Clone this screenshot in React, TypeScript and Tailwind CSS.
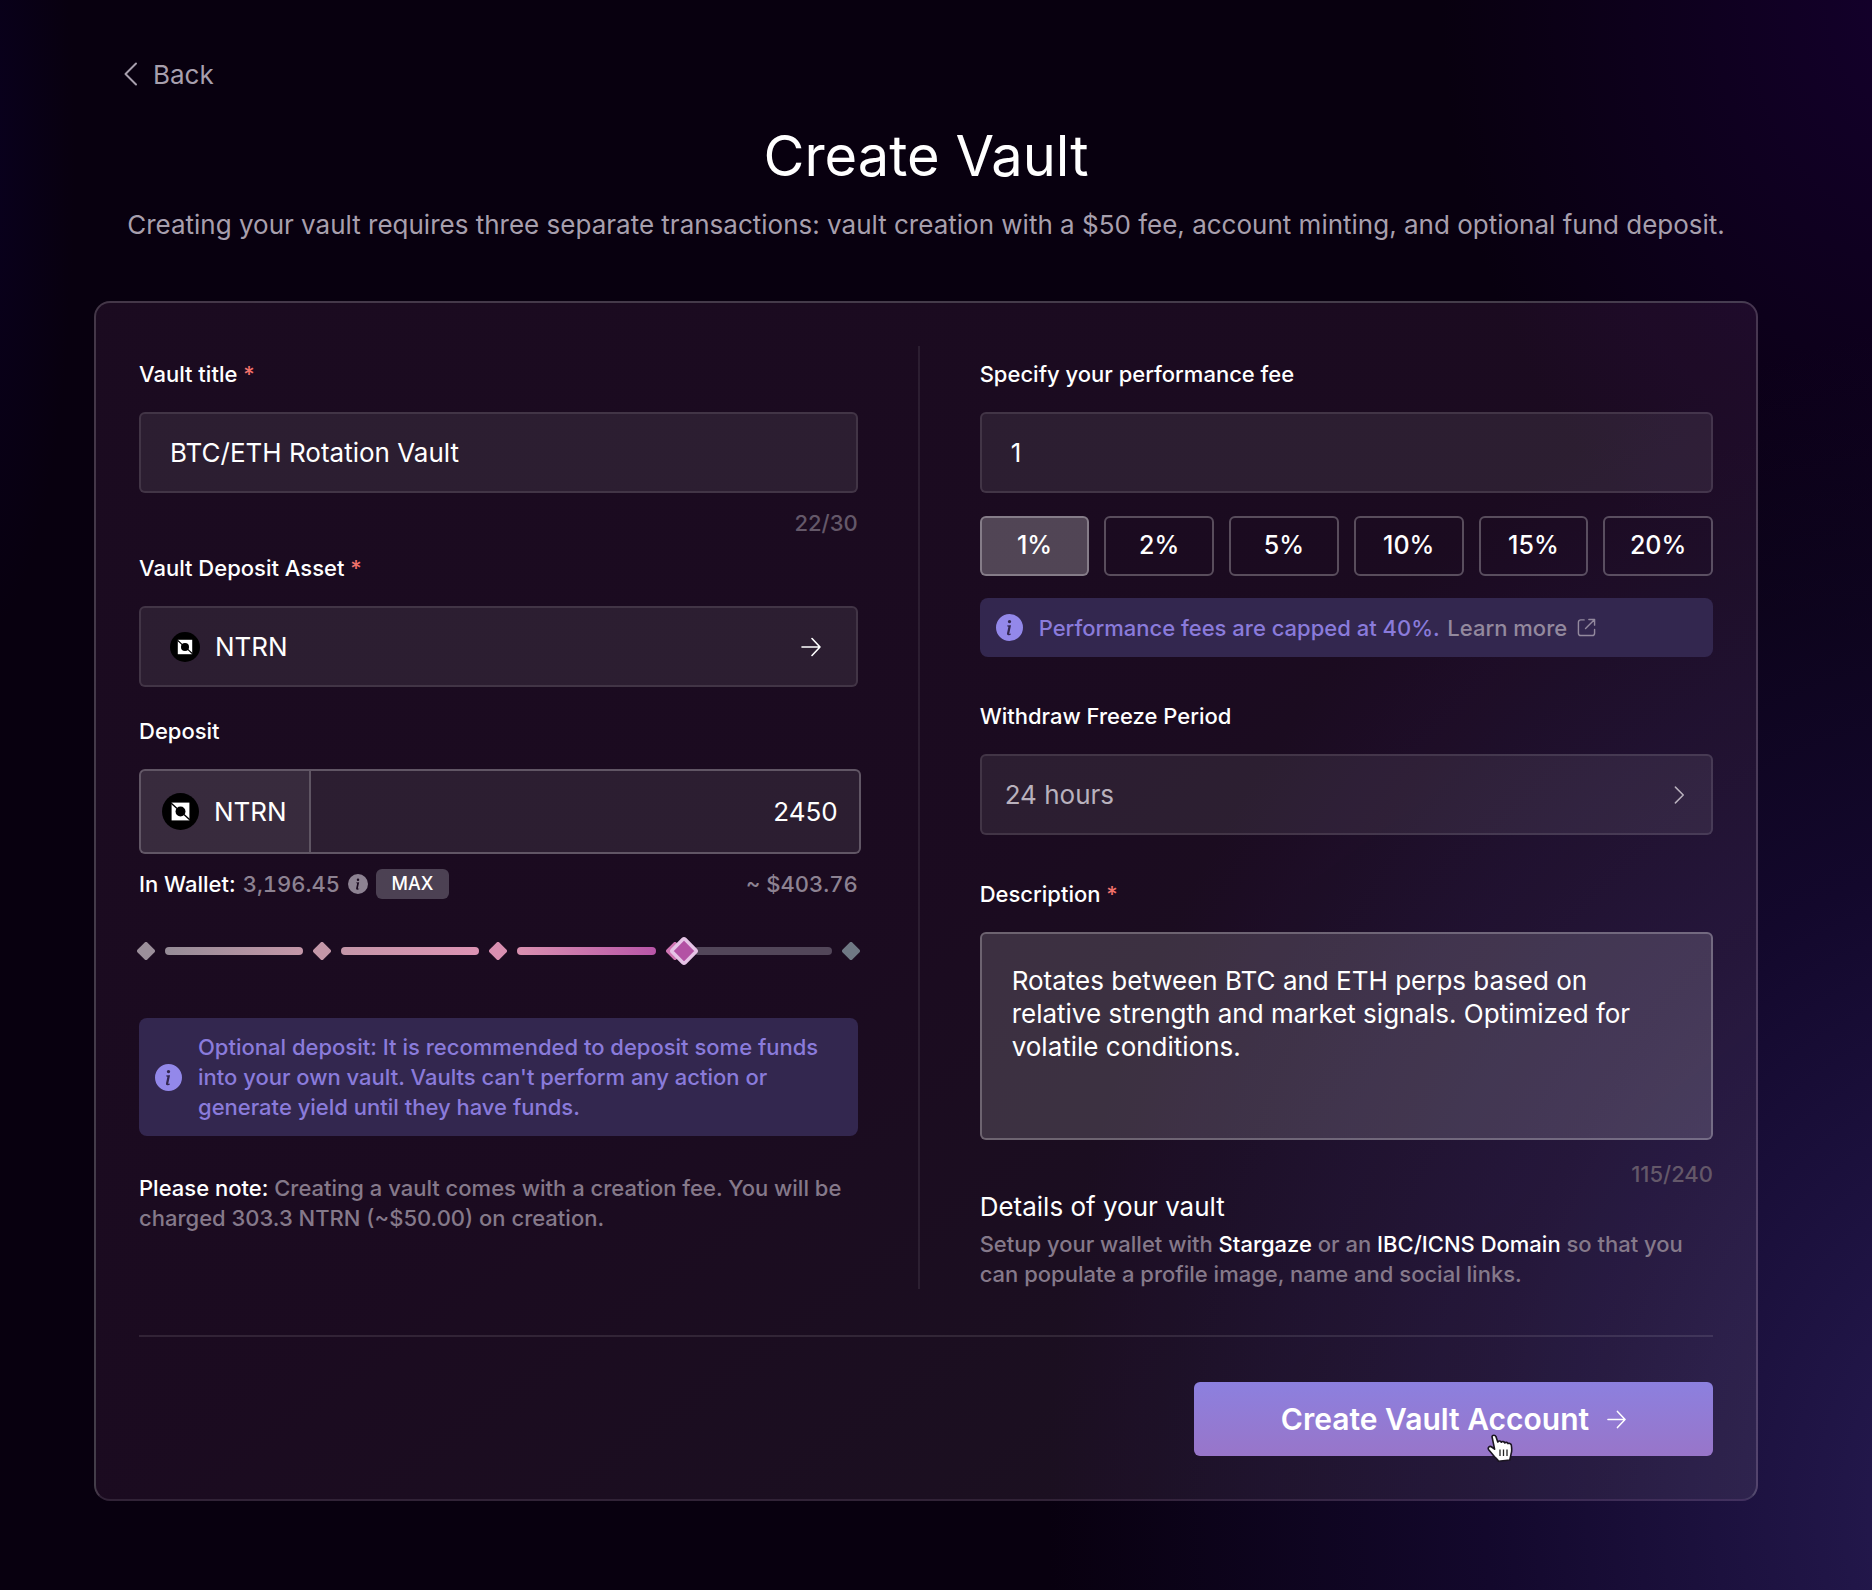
import { useState } from "react";
import type { ReactNode } from "react";
import { BsInfoCircleFill } from "react-icons/bs";

function NtrnLogo({ className }: { className: string }) {
  return (
    <svg viewBox="0 0 32 32" className={className} aria-hidden="true">
      <circle cx="16" cy="16" r="16" fill="#000" />
      <path d="M8.300 8.300h15.400v15.400H8.300z" fill="#fff" />
      <circle cx="16" cy="16" r="4.300" fill="#000" />
      <path d="M8 8.800 13 13.500M19 18.500l5 4.700" stroke="#000" strokeWidth="1.200" />
    </svg>
  );
}

function ArrowRight({ className }: { className: string }) {
  return (
    <svg viewBox="0 0 20 20" className={className} fill="none" stroke="currentColor" strokeWidth="1.6" strokeLinecap="round" strokeLinejoin="round" aria-hidden="true">
      <path d="M1 10h18M11 1.5 19 10l-8 8.500" />
    </svg>
  );
}

function Chevron({ className, back }: { className: string; back?: boolean }) {
  return (
    <svg viewBox="0 0 14 24" className={className} fill="none" stroke="currentColor" strokeWidth="2" strokeLinecap="round" strokeLinejoin="round" aria-hidden="true">
      <path d={back ? "M12.500 1.500 2 12l10.500 10.500" : "M1.500 1.500 12 12 1.500 22.500"} />
    </svg>
  );
}

function ExternalLink({ className }: { className: string }) {
  return (
    <svg viewBox="0 0 20 20" className={className} fill="none" stroke="currentColor" strokeWidth="1.500" strokeLinecap="round" strokeLinejoin="round" aria-hidden="true">
      <path d="M7.500 2H4A2.500 2.500 0 0 0 1.500 4.500V16A2.500 2.500 0 0 0 4 18.500h12a2.500 2.500 0 0 0 2.500-2.500v-4" />
      <path d="M9 11 18.500 1.500M12.500 1.500h6v6" />
    </svg>
  );
}

function Diamond({ color }: { color: string }) {
  return (
    <svg viewBox="0 0 18 18" className="size-[18px] shrink-0" aria-hidden="true">
      <rect x="2" y="2" width="14" height="14" rx="2.200" transform="rotate(45 9 9)" fill={color} />
    </svg>
  );
}

function HandCursor() {
  return (
    <svg viewBox="0 0 27 29" className="pointer-events-none absolute top-[52px] left-[293px] h-[29px] w-[27px]" aria-hidden="true">
      <path
        d="M5 2.600C5.200.8 8.400.8 8.900 2.600L10.800 8c.8-1.400 3-1.200 3.500.3.800-1.200 3-.9 3.500.6.800-1 2.700-.7 3.200.7.900-.8 2.900-.2 3.300 1.400.5 3.200.9 6-.2 8.800L22.800 26l-11.300 1.200c-.8-2-3.400-3.200-5.200-6L1.500 15.400C.5 13.200 2.800 11.500 4.700 13l2.900 2.200z"
        fill="#fff"
        stroke="#1a1420"
        strokeWidth="1.600"
        strokeLinejoin="round"
      />
      <path d="M13 15.500V22M16.500 15.500V22M20 15.500V22" stroke="#222" strokeWidth="1.300" />
    </svg>
  );
}

function Label({ htmlFor, required, children }: { htmlFor: string; required?: boolean; children: ReactNode }) {
  return (
    <label htmlFor={htmlFor} className="block text-[22px] leading-[30px] font-medium">
      {children}
      {required && <span className="text-[#f0716a]"> *</span>}
    </label>
  );
}

function InfoBox({ children, className }: { children: ReactNode; className: string }) {
  return (
    <div className={`flex items-center gap-4 rounded-lg bg-[#33274f] px-4 text-[22px] leading-[30px] font-medium text-[#8a7bdb] ${className}`}>
      <BsInfoCircleFill className="size-[27px] shrink-0 text-[#9388ea]" aria-hidden="true" />
      <p>{children}</p>
    </div>
  );
}

const FEES = [1, 2, 5, 10, 15, 20];

const field = "h-[81px] w-full rounded-md border-2 border-white/10 bg-white/8 text-[26px]";

export default function App() {
  const [title, setTitle] = useState("BTC/ETH Rotation Vault");
  const [deposit, setDeposit] = useState("2450");
  const [fee, setFee] = useState("1");
  const [description, setDescription] = useState(
    "Rotates between BTC and ETH perps based on relative strength and market signals. Optimized for volatile conditions.",
  );
  const wallet = 3196.45;
  const share = Math.min(1, (Number(deposit) || 0) / wallet);

  return (
    <div className="min-h-screen bg-[#08000f] bg-[radial-gradient(ellipse_52%_75%_at_108%_95%,#281d56_0%,#13082c_55%,transparent_100%),radial-gradient(ellipse_25%_40%_at_102%_0%,#14002c_0%,transparent_100%),radial-gradient(ellipse_5%_30%_at_-1%_10%,#09001f_0%,transparent_100%)] px-[94px] pt-14 pb-[88px] font-['Inter',sans-serif] text-white">
      <div className="w-full max-w-[1664px]">
        <a href="#back" className="ml-[29px] inline-flex h-9 items-center gap-[15px] text-[26px] text-[#a79fad]">
          <Chevron back className="h-6 w-[15px]" />
          Back
        </a>

        <header className="mt-7 text-center">
          <h1 className="text-[56px] leading-[72px] font-normal">Create Vault</h1>
          <p className="mt-[15px] text-[26px] leading-9 whitespace-nowrap text-[#a79fad]">
            Creating your vault requires three separate transactions: vault creation with a $50 fee, account minting, and optional fund deposit.
          </p>
        </header>

        <main className="mt-[58px] rounded-2xl border-2 border-white/18 border-b-white/10 bg-linear-to-br from-[#dc78d2]/9 via-[#dc78d2]/9 to-[#c8bec8]/10 p-[43px]">
          <div className="grid grid-cols-[49fr_2px_50fr] gap-[60px]">
            <section className="pt-[13px]">
              <Label htmlFor="title" required>Vault title</Label>
              <input id="title" maxLength={30} value={title} onChange={(e) => setTitle(e.target.value)} className={`${field} mt-[23px] px-[29px] outline-none`} />
              <p className="mt-[15px] text-right text-[22px] leading-[30px] font-medium text-[#645869]">{title.length}/30</p>

              <div className="mt-[15px]">
                <Label htmlFor="asset" required>Vault Deposit Asset</Label>
              </div>
              <button id="asset" type="button" className={`${field} mt-[23px] flex items-center px-[29px]`}>
                <NtrnLogo className="size-[30px]" />
                <span className="ml-[15px]">NTRN</span>
                <ArrowRight className="mr-[6px] ml-auto size-5" />
              </button>

              <div className="mt-[29px]">
                <Label htmlFor="deposit">Deposit</Label>
              </div>
              <div className="mt-[23px] -mr-[3px] flex h-[85px] items-stretch rounded-md border-2 border-white/25 bg-white/8 text-[26px]">
                <div className="flex w-[170px] items-center gap-[15px] border-r-2 border-white/20 bg-white/6 pl-[21px]">
                  <NtrnLogo className="size-[37px]" />
                  NTRN
                </div>
                <input id="deposit" inputMode="decimal" value={deposit} onChange={(e) => setDeposit(e.target.value)} className="min-w-0 flex-1 bg-transparent px-[21px] text-right outline-none" />
              </div>

              <div className="mt-[15px] flex h-[30px] items-center text-[22px] text-[#8d8292]">
                <span className="font-medium text-white">In Wallet:</span>
                <span className="ml-[7px] font-medium tabular-nums">3,196.45</span>
                <BsInfoCircleFill className="ml-2 size-5" aria-hidden="true" />
                <button type="button" onClick={() => setDeposit("3196.45")} className="ml-2 h-[30px] w-[73px] rounded-md bg-[#4c4153] text-[18px] leading-[30px] font-medium text-white">MAX</button>
                <span className="ml-auto font-medium tabular-nums">~ $403.76</span>
              </div>

              <div className="relative -mx-[2px] mt-[39px] flex h-[26px] items-center gap-[10px]">
                <Diamond color="#9b8f9a" />
                <span className="h-2 flex-1 rounded-sm bg-linear-to-r from-[#958c97] to-[#c496a8]" />
                <Diamond color="#c497a8" />
                <span className="h-2 flex-1 rounded-sm bg-linear-to-r from-[#c496a8] to-[#dd93b4]" />
                <Diamond color="#d98fb1" />
                <span className="h-2 flex-1 rounded-sm bg-linear-to-r from-[#d990af] to-[#b955a8]" />
                <Diamond color="#cf74b2" />
                <span className="h-2 flex-1 rounded-sm bg-[#524659]" />
                <Diamond color="#6f7884" />
                <div className="pointer-events-none absolute top-0 right-3 left-[9px] h-full">
                  <svg viewBox="0 0 30 30" className="absolute top-1/2 size-[30px] -translate-1/2" style={{ left: `${share * 100}%` }} aria-hidden="true">
                    <rect x="6" y="6" width="18" height="18" rx="1.500" transform="rotate(45 15 15)" fill="#b352a4" stroke="#e6c3e6" strokeWidth="3.500" />
                  </svg>
                </div>
                <input type="range" aria-label="Deposit amount" min={0} max={wallet} step={0.01} value={Number(deposit) || 0} onChange={(e) => setDeposit(e.target.value)} className="absolute inset-0 h-full w-full cursor-pointer opacity-0" />
              </div>

              <InfoBox className="mt-[54px] py-[14px]">
                Optional deposit: It is recommended to deposit some funds into your own vault. Vaults can't perform any action or generate yield until they have funds.
              </InfoBox>

              <p className="mt-[37px] text-[22px] leading-[30px] font-medium text-[#85798a]">
                <span className="text-white">Please note:</span> Creating a vault comes with a creation fee. You will be charged 303.3 NTRN (~$50.00) on creation.
              </p>
            </section>

            <div className="bg-white/8" />

            <section className="pt-[13px]">
              <Label htmlFor="fee">Specify your performance fee</Label>
              <input id="fee" inputMode="numeric" value={fee} onChange={(e) => setFee(e.target.value)} className={`${field} mt-[23px] px-[29px] outline-none`} />
              <div className="mt-[23px] grid grid-cols-6 gap-[15px]">
                {FEES.map((n) => (
                  <button
                    key={n}
                    type="button"
                    aria-pressed={fee === String(n)}
                    onClick={() => setFee(String(n))}
                    className={`h-[60px] rounded-md border-2 text-[25px] font-medium ${fee === String(n) ? "border-white/30 bg-white/24" : "border-white/27"}`}
                  >
                    {n}%
                  </button>
                ))}
              </div>
              <InfoBox className="mt-[22px] h-[59px]">
                Performance fees are capped at 40%.{" "}
                <a href="#fees" className="ml-[2px] inline-flex items-center gap-[10px] text-[#93899e]">
                  Learn more
                  <ExternalLink className="size-[19px]" />
                </a>
              </InfoBox>

              <div className="mt-11">
                <Label htmlFor="freeze">Withdraw Freeze Period</Label>
              </div>
              <button id="freeze" type="button" className={`${field} mt-[23px] flex items-center justify-between pr-[26px] pl-[23px] text-[#b9b1bd]`}>
                24 hours
                <Chevron className="h-[18px] w-[11px]" />
              </button>

              <div className="mt-11">
                <Label htmlFor="description" required>Description</Label>
              </div>
              <textarea
                id="description"
                maxLength={240}
                value={description}
                onChange={(e) => setDescription(e.target.value)}
                className="mt-[23px] block h-[208px] w-full resize-none rounded-md border-2 border-white/25 bg-white/15 px-[30px] py-[30px] text-[26px] leading-[33px] outline-none"
              />
              <p className="mt-[19px] text-right text-[22px] leading-[30px] font-medium text-[#645869]">{description.length}/240</p>
              <h2 className="mt-[2px] text-[26px] leading-8 font-normal">Details of your vault</h2>
              <p className="mt-[6px] text-[22px] leading-[30px] font-medium text-[#85798a]">
                Setup your wallet with <a href="#stargaze" className="text-white">Stargaze</a> or an{" "}
                <a href="#icns" className="text-white">IBC/ICNS Domain</a> so that you can populate a profile image, name and social links.
              </p>
            </section>
          </div>

          <hr className="mt-[46px] border-t-2 border-white/10" />

          <div className="mt-[45px] flex justify-end">
            <button type="button" className="relative flex h-[74px] w-[519px] items-center justify-center gap-[18px] rounded-md bg-linear-to-b from-[#8c80df] to-[#9875c9] text-[30px] font-semibold">
              Create Vault Account
              <ArrowRight className="size-[19px]" />
              <HandCursor />
            </button>
          </div>
        </main>
      </div>
    </div>
  );
}
